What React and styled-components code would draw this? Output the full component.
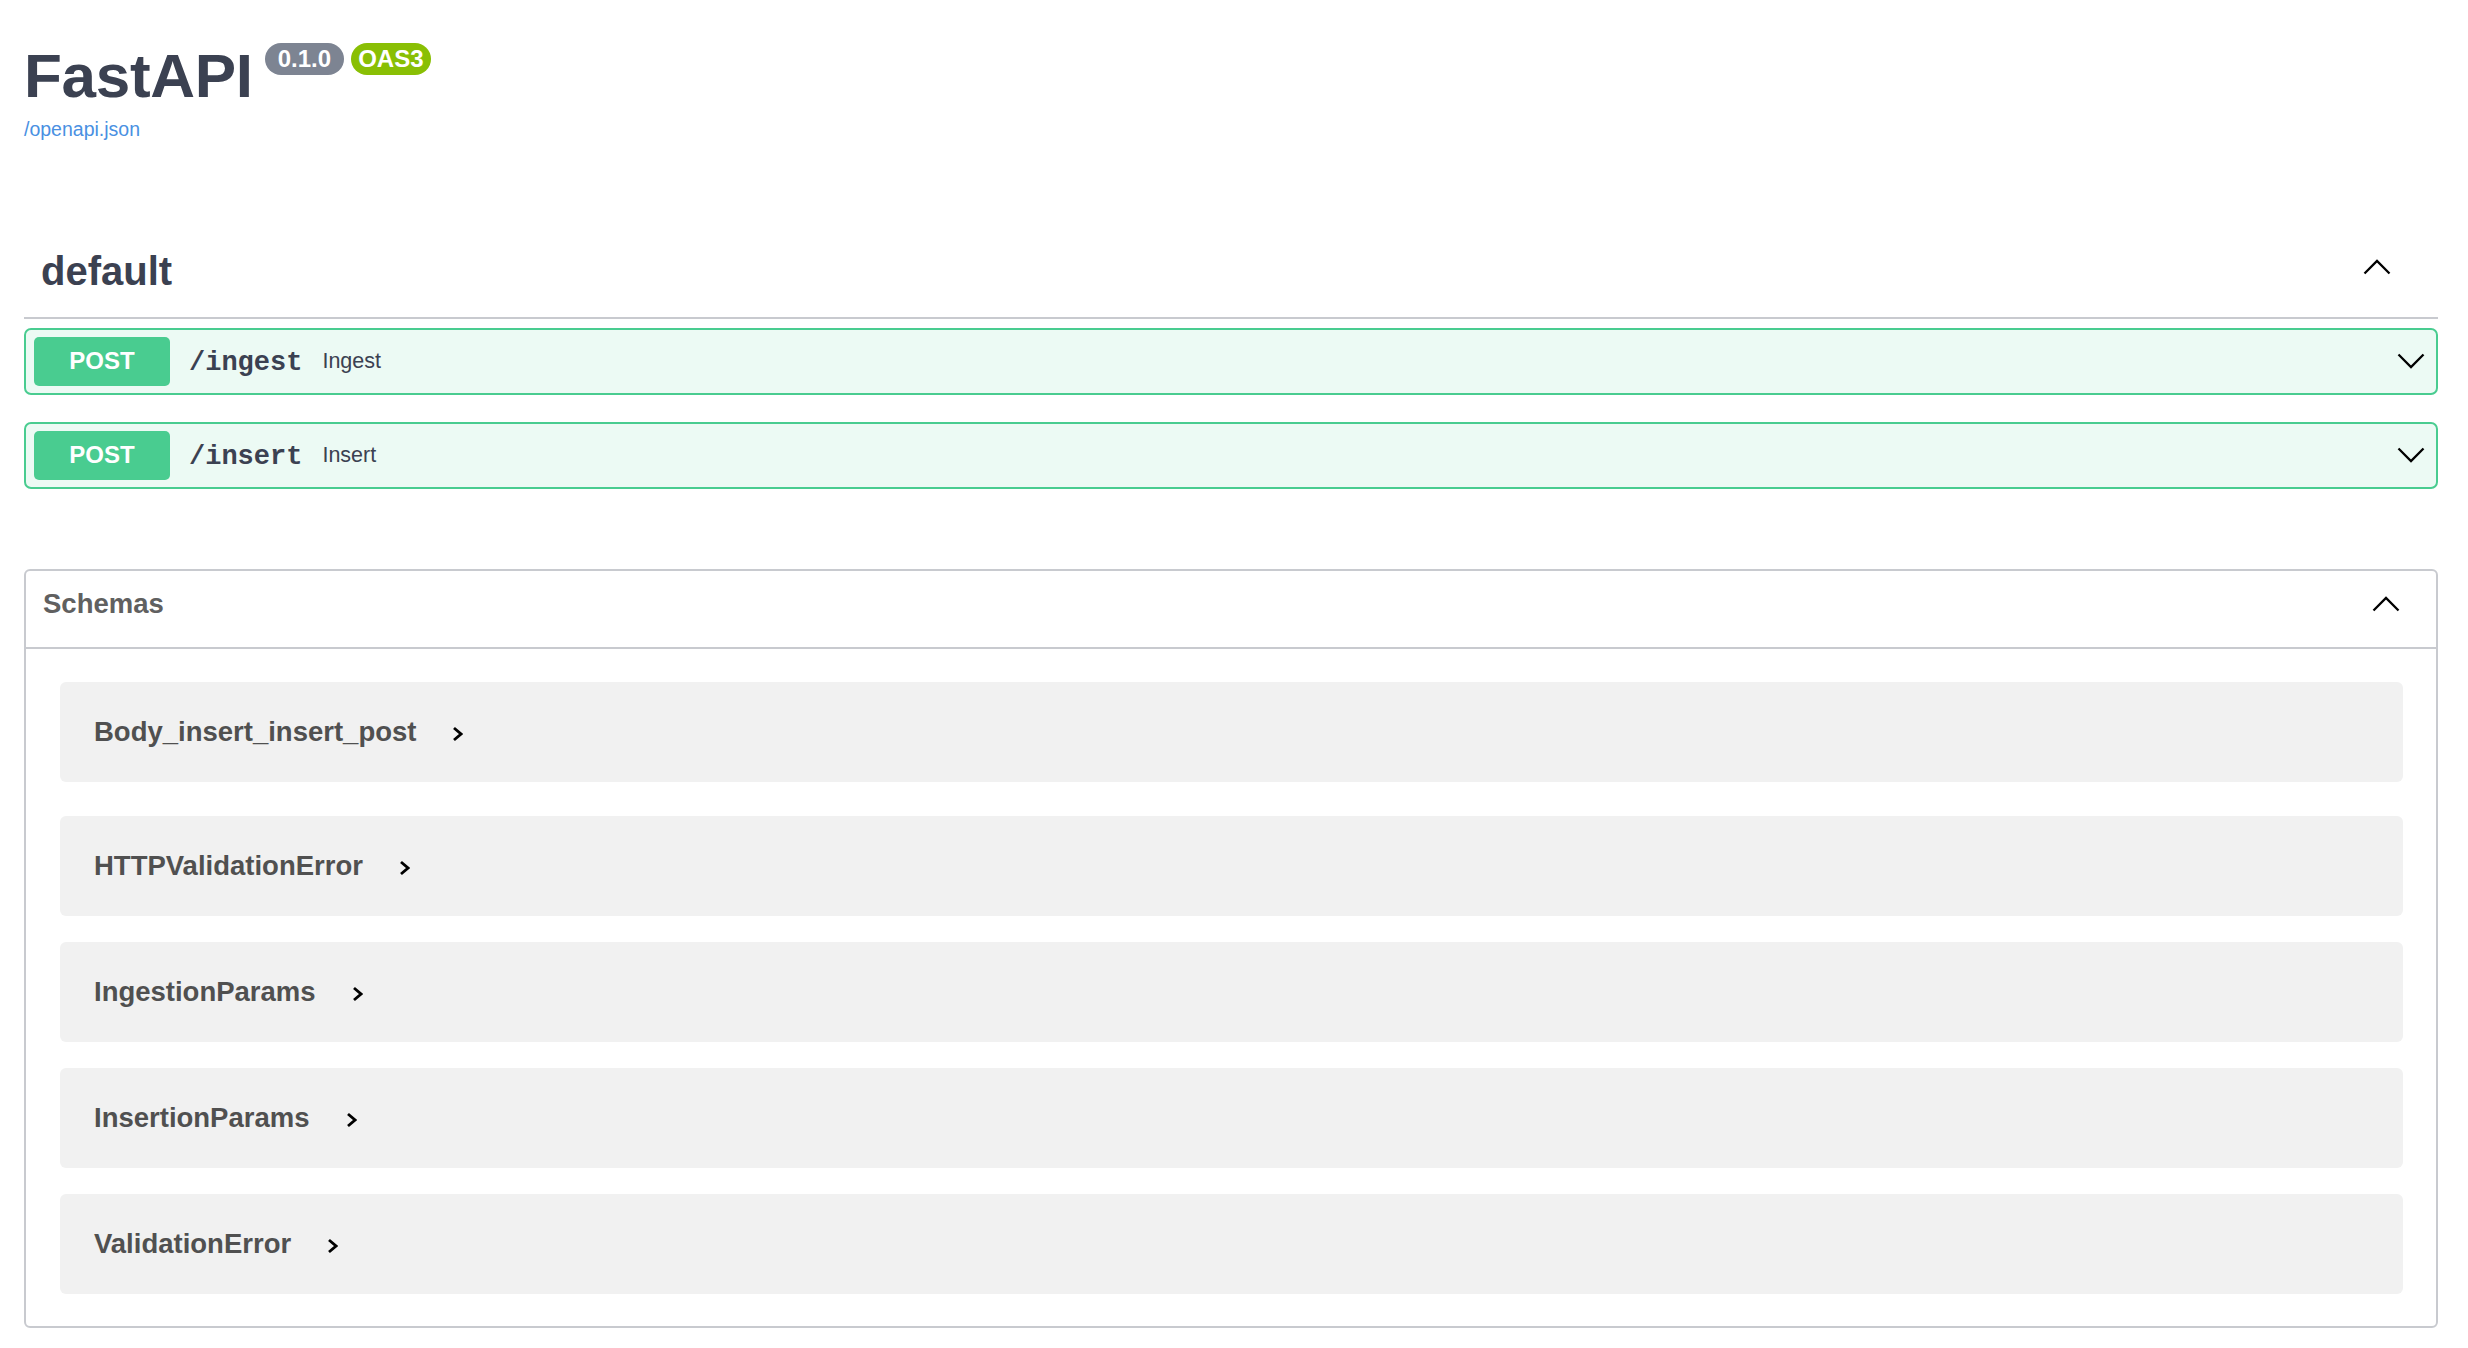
import React from 'react';
import styled, { createGlobalStyle } from 'styled-components';

const GlobalStyle = createGlobalStyle`
  html, body {
    margin: 0;
    padding: 0;
    background: #fff;
  }
  body {
    font-family: "Liberation Sans", Arial, sans-serif;
    color: #3b4151;
  }
`;

const textColor = '#3b4151';
const green = '#49cc90';
const lineColor = 'rgba(59, 65, 81, 0.28)';

const Page = styled.div`
  padding: 0 30px 40px 24px;
`;

const Info = styled.header`
  display: flex;
  flex-direction: column;
  align-items: flex-start;
`;

const TitleRow = styled.div`
  display: flex;
  align-items: flex-start;
  padding-top: 43px;
`;

const Title = styled.h1`
  margin: 2px 0 0;
  font-size: 62px;
  line-height: 1;
  font-weight: 700;
  color: ${textColor};
  letter-spacing: -0.3px;
`;

const Badge = styled.span`
  display: inline-flex;
  align-items: center;
  height: 32px;
  margin-left: ${p => p.$gap}px;
  padding: 0 ${p => p.$pad}px;
  border-radius: 57px;
  background: ${p => p.$bg};
  color: #fff;
  font-size: 24px;
  font-weight: 700;
  line-height: 1;
`;

const SpecLink = styled.a`
  margin-top: 13px;
  font-size: 19.5px;
  line-height: 1;
  color: #4990e2;
  text-decoration: none;
`;

const TagSection = styled.section`
  margin-top: 87px;
`;

const TagHeader = styled.div`
  display: flex;
  align-items: center;
  justify-content: space-between;
  height: 90px;
  padding: 0 47px 0 17px;
  border-bottom: 2px solid ${lineColor};
`;

const TagName = styled.h3`
  margin: 0 0 2px;
  font-size: 40px;
  line-height: 1;
  font-weight: 700;
  color: ${textColor};
`;

const ChevronBox = styled.span`
  display: flex;
  align-items: center;
  margin-bottom: ${p => p.$lift || 0}px;
  svg { display: block; }
`;

const Operations = styled.div`
  display: flex;
  flex-direction: column;
  gap: 27px;
  margin-top: 9px;
`;

const OpBlock = styled.div`
  display: flex;
  align-items: center;
  padding: 7px 11px 7px 7px;
  border: 2px solid ${green};
  border-radius: 7px;
  background: rgba(73, 204, 144, 0.1);
`;

const Method = styled.span`
  display: flex;
  align-items: center;
  justify-content: center;
  width: 136px;
  height: 49px;
  margin-left: 1px;
  border-radius: 5px;
  background: ${green};
  color: #fff;
  font-size: 24px;
  font-weight: 700;
`;

const Path = styled.span`
  margin-left: 19px;
  font-family: "Liberation Mono", "Courier New", monospace;
  font-size: 27px;
  font-weight: 700;
  color: ${textColor};
  position: relative;
  top: 2px;
`;

const Summary = styled.span`
  margin-left: 20px;
  font-size: 21.5px;
  color: ${textColor};
`;

const OpChevron = styled(ChevronBox)`
  margin-left: auto;
`;

const Models = styled.section`
  margin-top: 80px;
  border: 2px solid ${lineColor};
  border-radius: 6px;
`;

const ModelsHeader = styled.div`
  display: flex;
  align-items: center;
  justify-content: space-between;
  height: 66px;
  padding: 0 36px 10px 17px;
  border-bottom: 2px solid ${lineColor};
`;

const ModelsTitle = styled.h4`
  margin: 0;
  font-size: 27.5px;
  line-height: 1;
  font-weight: 700;
  color: #606060;
`;

const ModelList = styled.div`
  display: flex;
  flex-direction: column;
  padding: 33px 33px 32px 34px;
`;

const Model = styled.div`
  display: flex;
  align-items: center;
  height: 100px;
  margin-bottom: ${p => (p.$first ? 34 : 26)}px;
  padding-left: 34px;
  border-radius: 6px;
  background: #f1f1f1;
  &:last-child { margin-bottom: 0; }
`;

const ModelName = styled.span`
  font-size: 27.5px;
  font-weight: 700;
  color: #505050;
`;

const ModelArrow = styled.span`
  display: flex;
  margin-left: 36px;
  margin-top: 5px;
  svg { display: block; }
`;

const ChevronUp = () => (
  <svg width="28" height="16" viewBox="0 0 28 16" fill="none">
    <path d="M1.5 14.5 L14 2 L26.5 14.5" stroke="#000" strokeWidth="2.3" />
  </svg>
);

const ChevronDown = () => (
  <svg width="28" height="16" viewBox="0 0 28 16" fill="none">
    <path d="M1.5 1.5 L14 14 L26.5 1.5" stroke="#000" strokeWidth="2.3" />
  </svg>
);

const ArrowRight = () => (
  <svg width="11" height="16" viewBox="0 0 11 16" fill="none">
    <path d="M2 2 L9 8 L2 14" stroke="#000" strokeWidth="2.8" />
  </svg>
);

const operations = [
  { method: 'POST', path: '/ingest', summary: 'Ingest' },
  { method: 'POST', path: '/insert', summary: 'Insert' },
];

const schemas = [
  'Body_insert_insert_post',
  'HTTPValidationError',
  'IngestionParams',
  'InsertionParams',
  'ValidationError',
];

export default function App() {
  return (
    <Page>
      <GlobalStyle />
      <Info>
        <TitleRow>
          <Title>FastAPI</Title>
          <Badge $bg="#7d8492" $pad={13} $gap={12}>0.1.0</Badge>
          <Badge $bg="#89bf04" $pad={7} $gap={7}>OAS3</Badge>
        </TitleRow>
        <SpecLink href="#">/openapi.json</SpecLink>
      </Info>

      <TagSection>
        <TagHeader>
          <TagName>default</TagName>
          <ChevronBox $lift={9}><ChevronUp /></ChevronBox>
        </TagHeader>
        <Operations>
          {operations.map(op => (
            <OpBlock key={op.path}>
              <Method>{op.method}</Method>
              <Path>{op.path}</Path>
              <Summary>{op.summary}</Summary>
              <OpChevron><ChevronDown /></OpChevron>
            </OpBlock>
          ))}
        </Operations>
      </TagSection>

      <Models>
        <ModelsHeader>
          <ModelsTitle>Schemas</ModelsTitle>
          <ChevronBox><ChevronUp /></ChevronBox>
        </ModelsHeader>
        <ModelList>
          {schemas.map((name, i) => (
            <Model key={name} $first={i === 0}>
              <ModelName>{name}</ModelName>
              <ModelArrow><ArrowRight /></ModelArrow>
            </Model>
          ))}
        </ModelList>
      </Models>
    </Page>
  );
}
